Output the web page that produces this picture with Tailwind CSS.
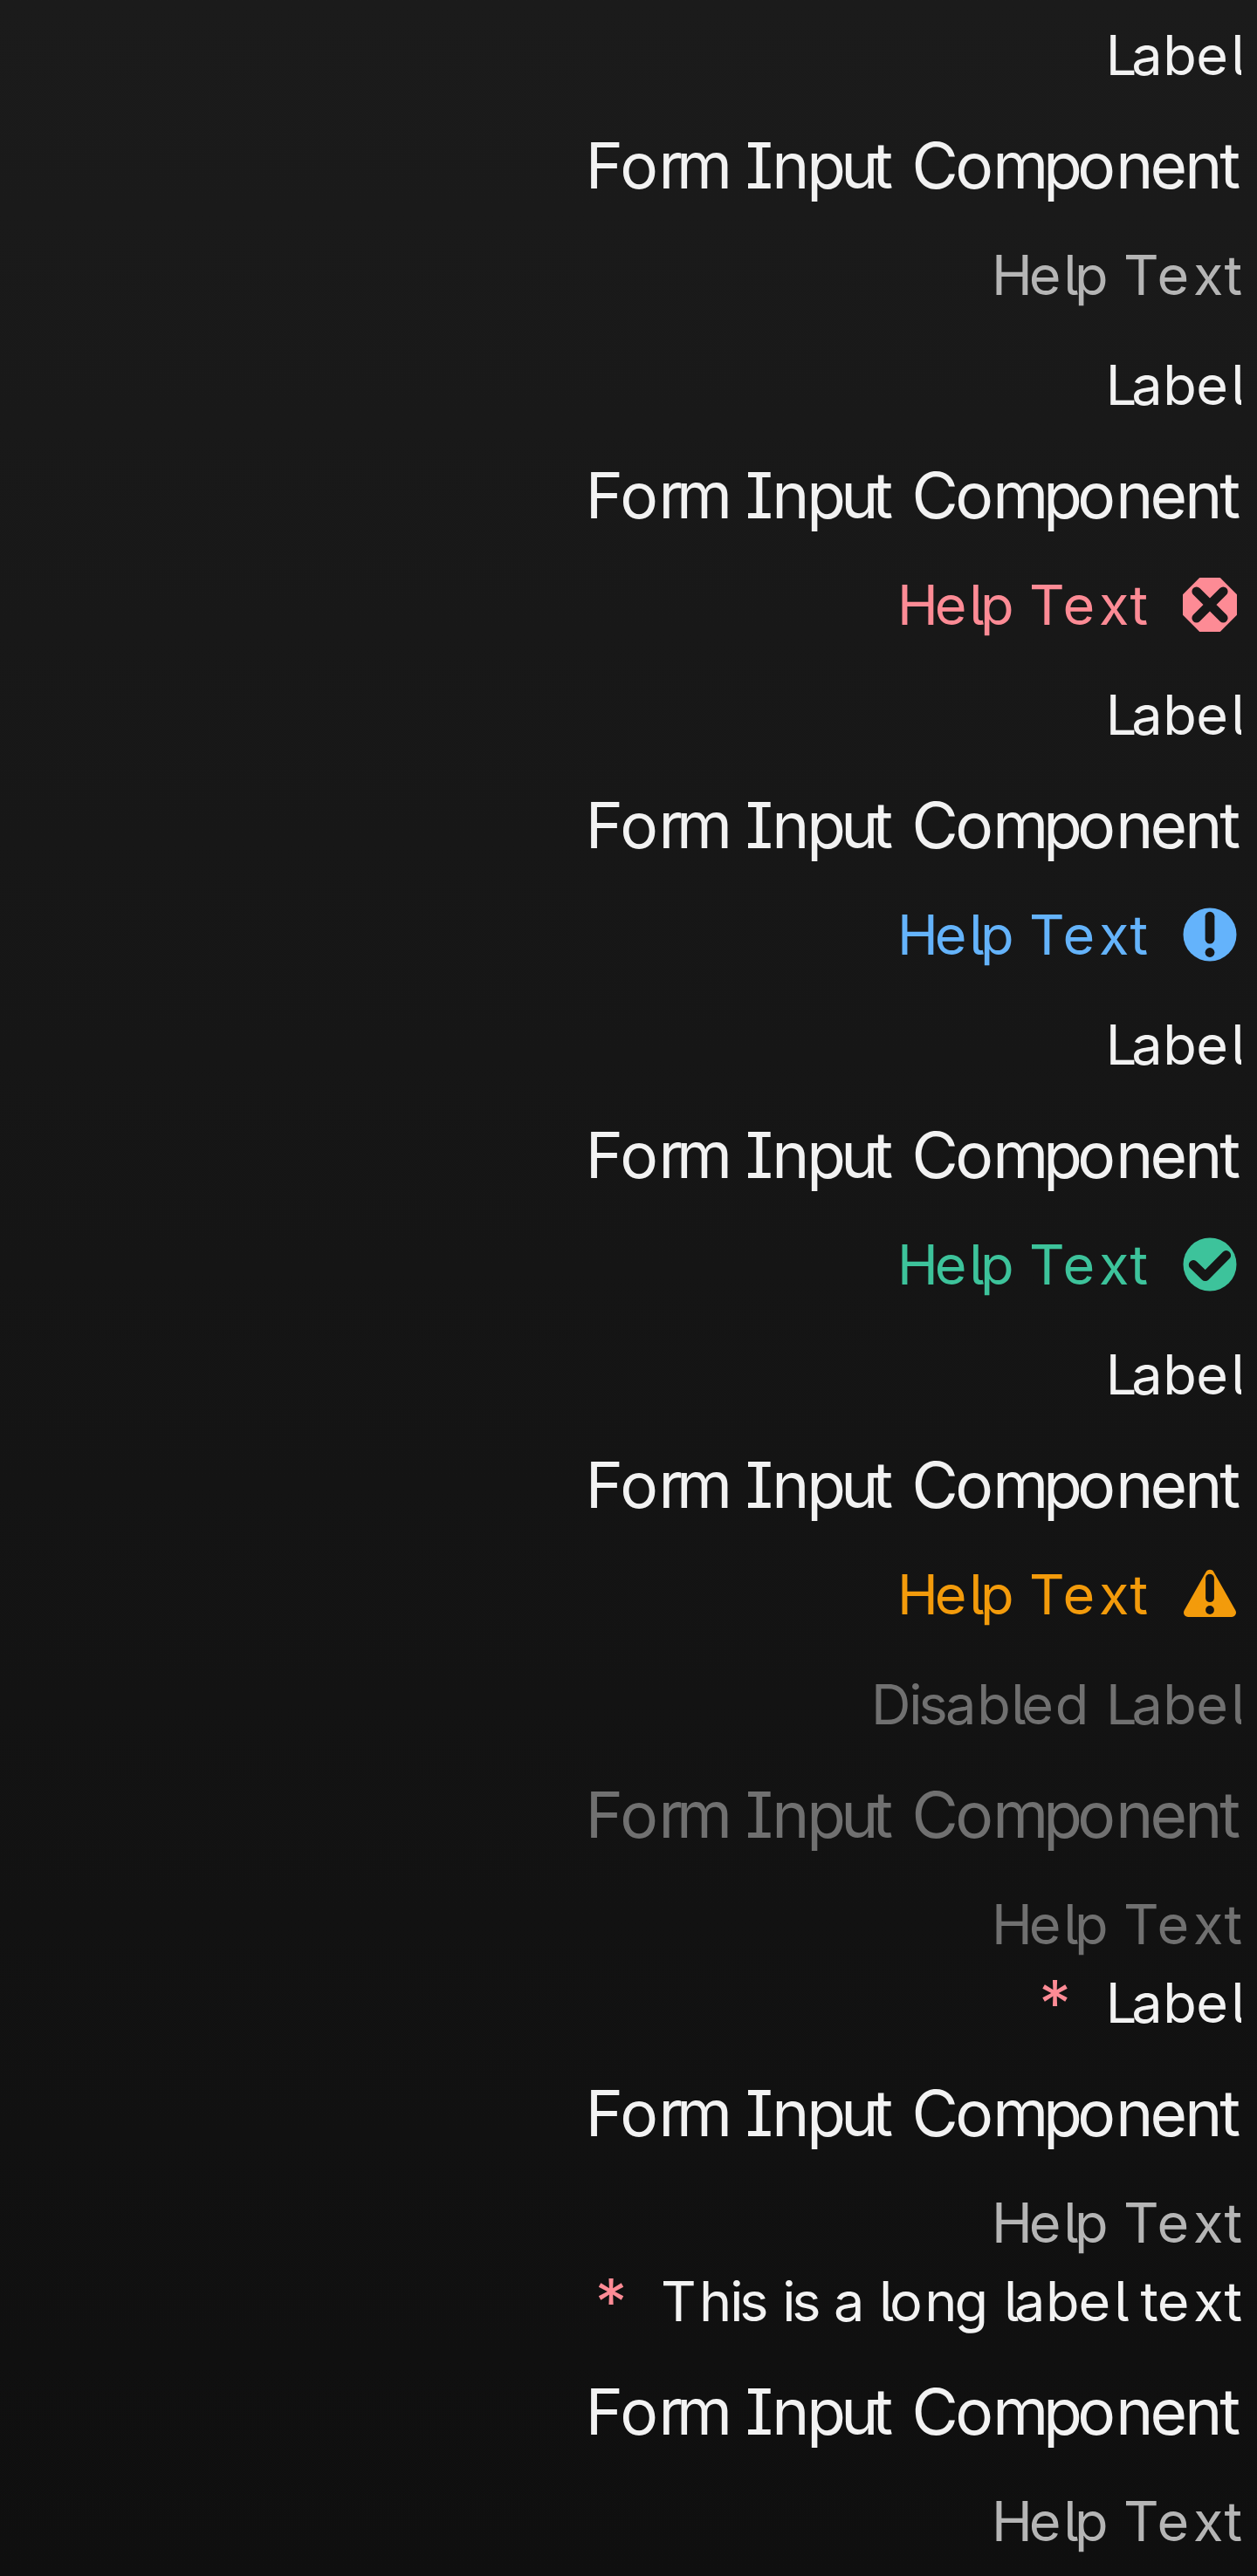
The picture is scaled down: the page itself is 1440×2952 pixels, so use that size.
<!DOCTYPE html>
<html lang="en">
<head>
<meta charset="utf-8">
<title>Form field states</title>
<script src="https://cdn.jsdelivr.net/npm/@tailwindcss/browser@4"></script>
</head>
<body class="bg-[#0f0f0f] font-['Inter',sans-serif]">
<main id="form" class="flex h-[2952px] w-[1440px] flex-col overflow-hidden bg-linear-to-b from-[#1b1b1b] to-[#0f0f0f] pr-[18px] text-[#f2f2f2] [font-kerning:none] [font-feature-settings:'ss02']"></main>
<script>
// Per-glyph tracking in px, one value per non-space character.
const texts = {
  'Label': { w: 155.2, t: [-6.1, .4, -.5, 3.2, 0] },
  'Help Text': { w: 286, t: [-4, 2.8, -4.6, -.4, -2.1, 4.7, 1, 0] },
  'Form Input Component': { w: 751.2, t: [-3.6, .5, -7.1, -5.8, -1.6, -3.1, -5.7, -7.2, .9, -3.6, -.8, -5.9, -5.7, .2, -4.1, -2.6, -3.2, 0] },
  'This is a long label text': { w: 665, t: [3.4, -2.2, -4.1, -2.1, -4.1, -3.3, -1.1, -5.5, 2.5, -2.8, .1, -5.4, .7, -1.1, 3.8, -4.7, -1.4, 4.7, 1, 0] },
  'Disabled Label': { w: 424, t: [-2.2, -4.1, -2.6, .7, .4, -5.2, 1.7, 1.9, -6.1, .4, -.5, 3.2, 0] }
};
function text(s) {
  let i = 0;
  const inner = [...s].map(c => c === ' ' ? ' ' : `<span style="letter-spacing:${texts[s].t[i++]}px">${c}</span>`).join('');
  return `<div class="shrink-0 overflow-x-clip whitespace-pre" style="width:${texts[s].w}px">${inner}</div>`;
}
const icon = (id, shape, cut) => `<svg class="mr-[5px] ml-[41px] size-[62px] shrink-0" viewBox="0 0 62 62" fill="currentColor"><mask id="${id}" maskUnits="userSpaceOnUse" x="0" y="0" width="62" height="62"><rect width="62" height="62" fill="#fff"/><g fill="#000">${cut}</g></mask><g mask="url(#${id})">${shape}</g></svg>`;
const icons = {
  error: icon('m-error', '<path d="M19.7 1H42.3L61 19.7V42.3L42.3 61H19.7L1 42.3V19.7Z" stroke="currentColor" stroke-width="2" stroke-linejoin="round"/>', '<path d="M15.7 15.7L46.3 46.3M46.3 15.7L15.7 46.3" stroke="#000" stroke-width="10.6" stroke-linecap="round"/>'),
  info: icon('m-info', '<circle cx="31" cy="31" r="30.5"/>', '<rect x="25.6" y="4.8" width="10.8" height="36.8" rx="5.4"/><circle cx="31" cy="51.5" r="5.4"/>'),
  success: icon('m-success', '<circle cx="31" cy="31" r="30.5"/>', '<path d="M12.2 31.5L25.7 44.7L49.7 20.5" fill="none" stroke="#000" stroke-width="10.8" stroke-linecap="round" stroke-linejoin="round"/>'),
  warning: icon('m-warning', '<path d="M31 7.7L56 52H6Z" stroke="currentColor" stroke-width="10" stroke-linejoin="round"/>', '<rect x="26.1" y="7.7" width="9.8" height="32.4" rx="4.9"/><circle cx="31" cy="49" r="4.9"/>')
};
const fields = [
  { help: 'text-[#b5b5b5]' },
  { help: 'text-[#fd8b95]', icon: 'error' },
  { help: 'text-[#64b3fb]', icon: 'info' },
  { help: 'text-[#3dc39b]', icon: 'success' },
  { help: 'text-[#f39b0b]', icon: 'warning' },
  { label: 'Disabled Label', help: 'text-[#707070]', main: 'text-[#707070]' },
  { help: 'text-[#b5b5b5]', required: 'mr-[40px]' },
  { label: 'This is a long label text', help: 'text-[#b5b5b5]', required: 'mr-[38.6px]' }
];
document.getElementById('form').innerHTML = fields.map(f => `
  <section class="${f.main || ''}">
    <div class="flex items-start justify-end text-[63px] ${f.required ? 'h-[90px] leading-[54px]' : 'h-[126px] leading-[126px]'}">
      ${f.required ? `<span class="text-[73px] leading-[55px] text-[#fd8b95] ${f.required}">*</span>` : ''}${text(f.label || 'Label')}
    </div>
    <div class="flex h-[126px] items-start justify-end text-[73px] leading-[127px]">${text('Form Input Component')}</div>
    <div class="flex h-[126px] items-center justify-end text-[63px] leading-[126px] ${f.help}">${text('Help Text')}${f.icon ? icons[f.icon] : ''}</div>
  </section>`).join('');
</script>
</body>
</html>
